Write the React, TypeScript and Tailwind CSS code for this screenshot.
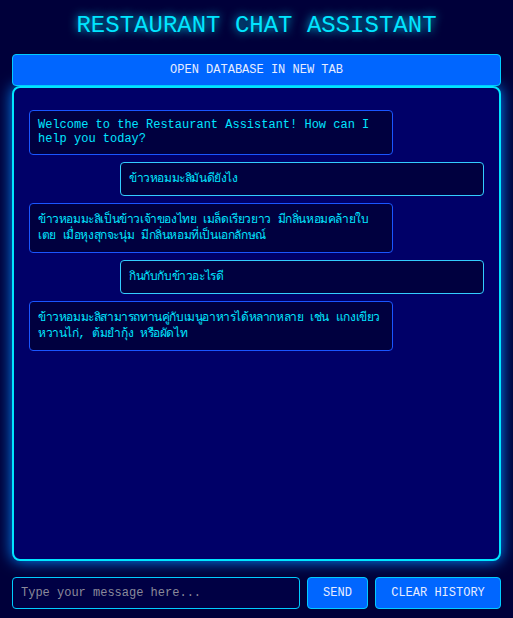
import { useState } from 'react';

interface Message {
  role: 'bot' | 'user';
  text: string;
}

const initialMessages: Message[] = [
  { role: 'bot', text: 'Welcome to the Restaurant Assistant! How can I help you today?' },
  { role: 'user', text: 'ข้าวหอมมะลิมันดียังไง' },
  { role: 'bot', text: 'ข้าวหอมมะลิเป็นข้าวเจ้าของไทย เมล็ดเรียวยาว มีกลิ่นหอมคล้ายใบเตย เมื่อหุงสุกจะนุ่ม มีกลิ่นหอมที่เป็นเอกลักษณ์' },
  { role: 'user', text: 'กินกับกับข้าวอะไรดี' },
  { role: 'bot', text: 'ข้าวหอมมะลิสามารถทานคู่กับเมนูอาหารได้หลากหลาย เช่น แกงเขียวหวานไก่, ต้มยำกุ้ง หรือผัดไท' },
];

const isThai = (s: string) => /[\u0E00-\u0E7F]/.test(s);

export default function App() {
  const [messages, setMessages] = useState<Message[]>(initialMessages);
  const [input, setInput] = useState('');

  const send = () => {
    if (!input.trim()) return;
    setMessages([...messages, { role: 'user', text: input }]);
    setInput('');
  };

  return (
    <div
      className="min-h-screen bg-[#00003a] px-3 pt-3 pb-[10px] text-[12px] text-[#00e5ff]"
      style={{ fontFamily: '"Liberation Mono", "Courier New", monospace' }}
    >
      {/* Header */}
      <h1 className="text-center text-[24px] leading-[28px] font-normal text-[#00e5ff] [text-shadow:0_0_10px_#00e5ff] mb-[14px]">
        RESTAURANT CHAT ASSISTANT
      </h1>

      <button className="w-full h-[32px] bg-[#0066ff] border border-[#00ccff] rounded-[4px] text-[#e6ecff] text-[12px]">
        OPEN DATABASE IN NEW TAB
      </button>

      {/* Chat window */}
      <div className="h-[475px] bg-[#000068] border-2 border-[#00e5ff] rounded-[8px] shadow-[0_0_15px_#0088ff] overflow-y-auto px-[15px] pt-[22px] pb-[15px] flex flex-col gap-[7px]">
        {messages.map((m, i) => (
          <div
            key={i}
            className={`w-[80%] bg-[#00003f] rounded-[4px] px-[8px] py-[8px] ${
              isThai(m.text) ? 'tracking-[-0.4px] leading-[16px]' : 'leading-[13.5px]'
            } ${
              m.role === 'user'
                ? 'self-end border border-[#33ccff] text-[#00e5ff]'
                : 'self-start border border-[#1a55ff] text-[#00e5ff]'
            }`}
          >
            {m.text}
          </div>
        ))}
      </div>

      {/* Input row */}
      <div className="mt-[16px] flex gap-[7px] h-[32px]">
        <input
          type="text"
          value={input}
          onChange={(e) => setInput(e.target.value)}
          placeholder="Type your message here..."
          className="flex-1 min-w-0 bg-[#000044] border border-[#00ccff] rounded-[4px] px-[8px] text-[12px] text-[#00e5ff] placeholder-[#8a8a9a] focus:outline-none"
        />
        <button
          onClick={send}
          className="w-[61px] bg-[#0066ff] border border-[#00ccff] rounded-[4px] text-[#e6ecff] text-[12px]"
        >
          SEND
        </button>
        <button
          onClick={() => setMessages([])}
          className="w-[126px] bg-[#0066ff] border border-[#00ccff] rounded-[4px] text-[#e6ecff] text-[12px]"
        >
          CLEAR HISTORY
        </button>
      </div>
    </div>
  );
}
